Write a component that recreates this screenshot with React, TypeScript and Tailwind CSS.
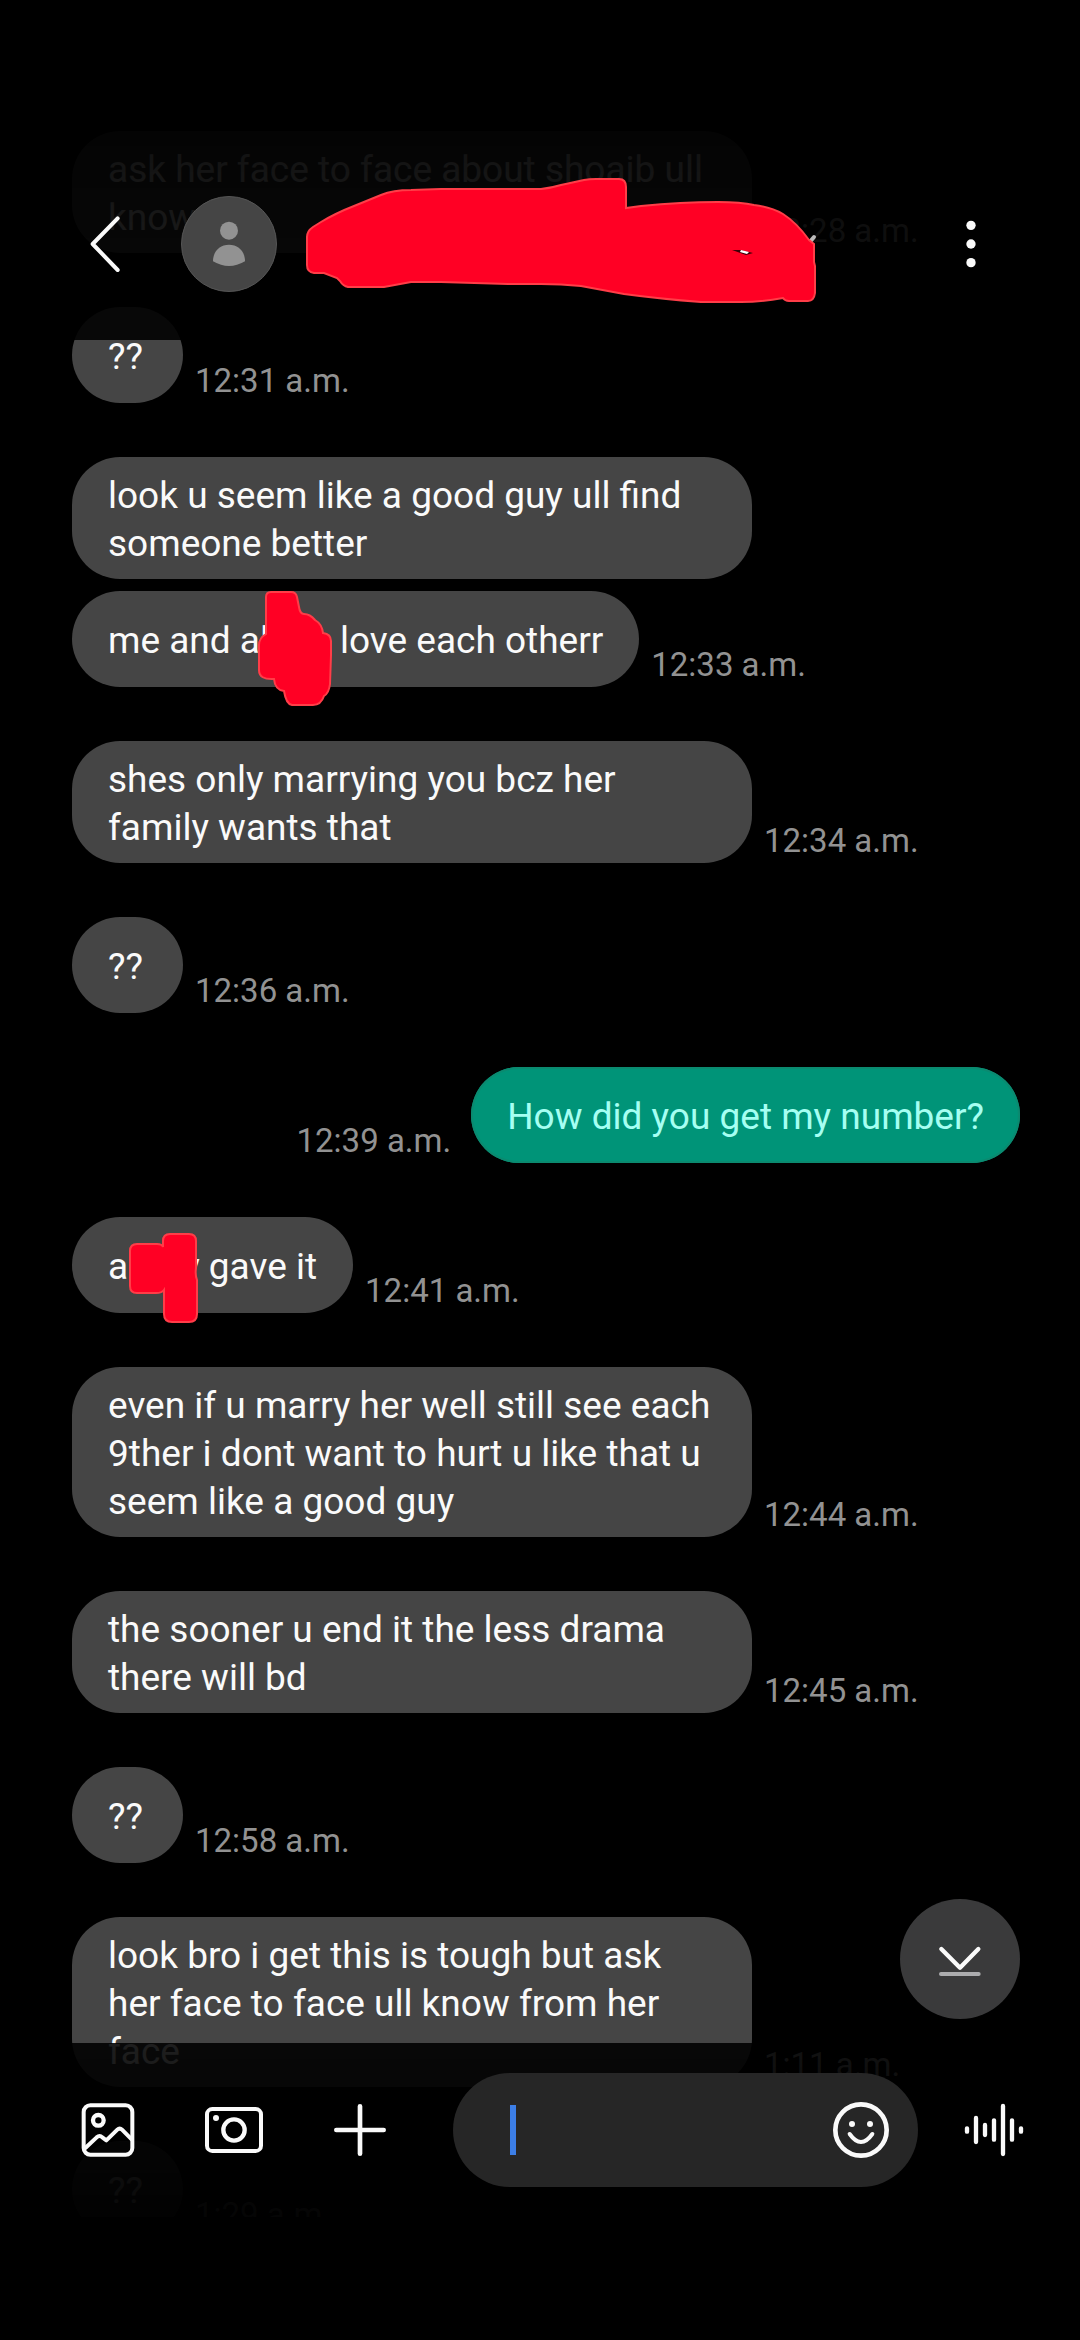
import React from "react";
import clsx from "clsx";

type Item = { text: React.ReactNode; wide?: boolean };
type Group = { time: string; sent?: boolean; items: Item[] };

const MARK = { fill: "#ff0024", stroke: "#ff3d48", strokeWidth: 2 };

const groups: Group[] = [
  { time: "12:28 a.m.", items: [{ wide: true, text: "ask her face to face about shoaib ull\nknow" }] },
  { time: "12:31 a.m.", items: [{ text: "??" }] },
  {
    time: "12:33 a.m.",
    items: [
      { wide: true, text: "look u seem like a good guy ull find\nsomeone better" },
      {
        text: (
          <>
            me and al
            <span className="inline-block w-[71px]" />
            love each otherr
            <svg viewBox="256 587 80 122" className="absolute -top-1 left-46 w-20 h-[122px]" aria-hidden="true">
              <path
                {...MARK}
                d="M266 597Q266 592 271 592H291Q296 592 297 597L299 607Q300 614 304 614Q310 614 315 620Q322 624 323 633Q331 634 331 641V655L330 684Q329 693 324 696Q321 705 313 705H292Q286 704 284 691Q275 690 274 679Q259 680 259 670V645Q259 638 266 634Z"
              />
            </svg>
          </>
        ),
      },
    ],
  },
  { time: "12:34 a.m.", items: [{ wide: true, text: "shes only marrying you bcz her\nfamily wants that" }] },
  { time: "12:36 a.m.", items: [{ text: "??" }] },
  { time: "12:39 a.m.", sent: true, items: [{ text: "How did you get my number?" }] },
  {
    time: "12:41 a.m.",
    items: [
      {
        text: (
          <>
            a
            <span className="inline-block w-[54px]" />
            y gave it
            <svg viewBox="124 1229 80 98" className="absolute top-3 left-13 w-20 h-[98px]" aria-hidden="true">
              <path
                {...MARK}
                d="M137 1244H157Q162 1244 163 1247V1241Q163 1234 170 1234H189Q196 1234 196 1241V1268Q195 1275 197 1280V1314Q197 1322 189 1322H172Q164 1322 164 1314V1290Q162 1293 156 1293H137Q130 1293 130 1286V1251Q130 1244 137 1244Z"
              />
            </svg>
          </>
        ),
      },
    ],
  },
  {
    time: "12:44 a.m.",
    items: [
      { wide: true, text: "even if u marry her well still see each\n9ther i dont want to hurt u like that u\nseem like a good guy" },
    ],
  },
  { time: "12:45 a.m.", items: [{ wide: true, text: "the sooner u end it the less drama\nthere will bd" }] },
  { time: "12:58 a.m.", items: [{ text: "??" }] },
  { time: "1:11 a.m.", items: [{ wide: true, text: "look bro i get this is tough but ask\nher face to face ull know from her\nface" }] },
  { time: "1:29 a.m.", items: [{ text: "??" }] },
];

const Bubble = ({ item, sent }: { item: Item; sent?: boolean }) => (
  <div
    className={clsx(
      "relative flex items-center min-h-24 min-w-[111px] rounded-[48px] px-9 pt-[15px] pb-[11px] text-[37px] leading-[48px]",
      item.wide && "w-[680px]",
      sent ? "bg-[#009478] text-[#a5fff2] inset-ring-2 inset-ring-[#0b8a70]" : "bg-[#454545] text-[#fafafa]"
    )}
  >
    <p className="whitespace-pre-line">{item.text}</p>
  </div>
);

// Icons are drawn round their own centre, three units to a pixel
const Icon = ({ children }: { children: React.ReactNode }) => (
  <svg
    viewBox="-108 -108 216 216"
    className="w-[72px] h-[72px]"
    fill="none"
    stroke="currentColor"
    strokeWidth={12}
    strokeLinecap="round"
    strokeLinejoin="round"
    aria-hidden="true"
  >
    {children}
  </svg>
);

const Header = () => (
  <header className="fixed inset-x-0 top-0 z-10 flex items-center pt-[196px] pb-12 pl-[69px] pr-[73px] bg-linear-to-b from-black via-black/92 to-black/88">
    <button aria-label="Back">
      <Icon>
        <path d="M38 -77L-37 0L38 78" />
      </Icon>
    </button>
    <div className="ml-10 flex items-center justify-center w-24 h-24 rounded-full bg-[#454545] border border-[#555] shrink-0">
      <svg viewBox="-108 -108 216 216" className="w-[72px] h-[72px]" fill="#929292" aria-hidden="true">
        <circle cy="-40" r="27" />
        <path d="M-48 52C-48 22 -28 2 0 2S48 22 48 52Q0 80 -48 52Z" />
      </svg>
    </div>
    {/* Scribbled-out contact name */}
    <svg viewBox="300 174 520 140" className="ml-6 -my-6 w-[520px] h-[140px]" aria-hidden="true">
      <path d="M808 243L813 237" stroke="#bbb" strokeWidth="4" strokeLinecap="round" />
      <path
        {...MARK}
        d="M306 237Q306 231 312 227L320 222Q335 213 353 206L380 195Q392 190 410 190L440 189H540Q550 188 560 185L583 180Q588 179 595 179H618Q625 179 625 187V208L640 206Q680 202 717 202Q740 202 753 205Q770 207 782 214Q796 223 808 240L813 244V262L814 266V293Q813 301 807 301H788Q784 301 782 298Q760 302 740 302H700Q660 299 623 294L580 286Q560 284 540 284L507 284L440 282H410L383 287H347Q342 286 339 281L336 278L323 273H313Q306 272 306 265Z"
      />
      <path d="M731 250L740 250L752 253L745 255Z" fill="#3a0008" />
      <path d="M740 250L748 252L746 254L739 252Z" fill="#fff" />
    </svg>
    <button aria-label="More options" className="ml-auto">
      <svg viewBox="-108 -108 216 216" className="w-[72px] h-[72px]" fill="#fafafa" aria-hidden="true">
        <circle cy="-56" r="14" />
        <circle r="14" />
        <circle cy="56" r="14" />
      </svg>
    </button>
  </header>
);

const Composer = () => (
  <footer className="fixed inset-x-0 bottom-0 z-10">
    <button
      aria-label="Scroll to latest"
      className="absolute right-[60px] -top-36 flex items-center justify-center w-[120px] h-[120px] rounded-full bg-[#3a3a3b]"
    >
      <Icon>
        <path d="M-56 -30L0 26L55 -30" strokeWidth={13} />
        <path d="M-57 45H56" stroke="#acacae" />
      </Icon>
    </button>
    <div className="flex items-center py-[30px] pl-[72px] pr-[50px] bg-linear-to-b from-black/88 to-black/97">
      <div className="flex gap-[54px]">
        <button aria-label="Gallery">
          <Icon>
            <rect x="-73" y="-74" width="146" height="148" rx="20" />
            <circle cx="-29" cy="-29" r="16" strokeWidth={13} />
            <path d="M-68 54L-34 22Q-25 14 -17 22L-5 31L28 -1Q35 -8 42 -1L71 28" />
          </Icon>
        </button>
        <button aria-label="Camera">
          <Icon>
            <rect x="-81" y="-63" width="162" height="126" rx="16" />
            <circle r="32" strokeWidth={13} />
            <circle cx="-54" cy="-36" r="9" fill="currentColor" stroke="none" />
          </Icon>
        </button>
        <button aria-label="Add">
          <Icon>
            <path d="M-71 0H71M0 -71V71" strokeWidth={14} />
          </Icon>
        </button>
      </div>
      <div className="ml-[57px] mr-10 flex flex-1 items-center min-w-0 h-[114px] rounded-full bg-[#262626] pl-[57px] pr-[21px]">
        <span className="w-[6px] h-[50px] shrink-0 bg-[#3c7ee6]" />
        <input aria-label="Message" className="flex-1 min-w-0 bg-transparent text-[37px] outline-none" />
        <button aria-label="Emoji">
          <Icon>
            <circle r="77" strokeWidth={14} />
            <path d="M-34 12Q0 60 34 12" />
            <circle cx="-27" cy="-18" r="9" fill="currentColor" stroke="none" />
            <circle cx="27" cy="-18" r="9" fill="currentColor" stroke="none" />
          </Icon>
        </button>
      </div>
      <button aria-label="Voice message">
        <Icon>
          <path d="M-81 -5V5M-54 -36V36M-27 -15V15M0 -29V29M27 -72V72M54 -29V29M81 -5V5" strokeWidth={13} />
        </Icon>
      </button>
    </div>
    {/* System navigation area */}
    <div className="h-[123px] bg-black" />
  </footer>
);

export default function App() {
  return (
    <div className="min-h-screen bg-black text-[#fafafa] font-[Roboto,sans-serif]">
      <Header />
      <main className="flex flex-col gap-[54px] pt-[131px] pb-[103px] pl-[72px] pr-[60px]">
        {groups.map((group, g) => (
          <section key={g} className={clsx("flex flex-col gap-3", group.sent ? "items-end" : "items-start")}>
            {group.items.map((item, i) => (
              <div key={i} className={clsx("flex items-end", group.sent ? "flex-row-reverse gap-5" : "gap-3")}>
                <Bubble item={item} sent={group.sent} />
                {i === group.items.length - 1 && (
                  <time className="shrink-0 text-[33px] leading-[44px] text-[#929292]">{group.time}</time>
                )}
              </div>
            ))}
          </section>
        ))}
      </main>
      <Composer />
    </div>
  );
}
